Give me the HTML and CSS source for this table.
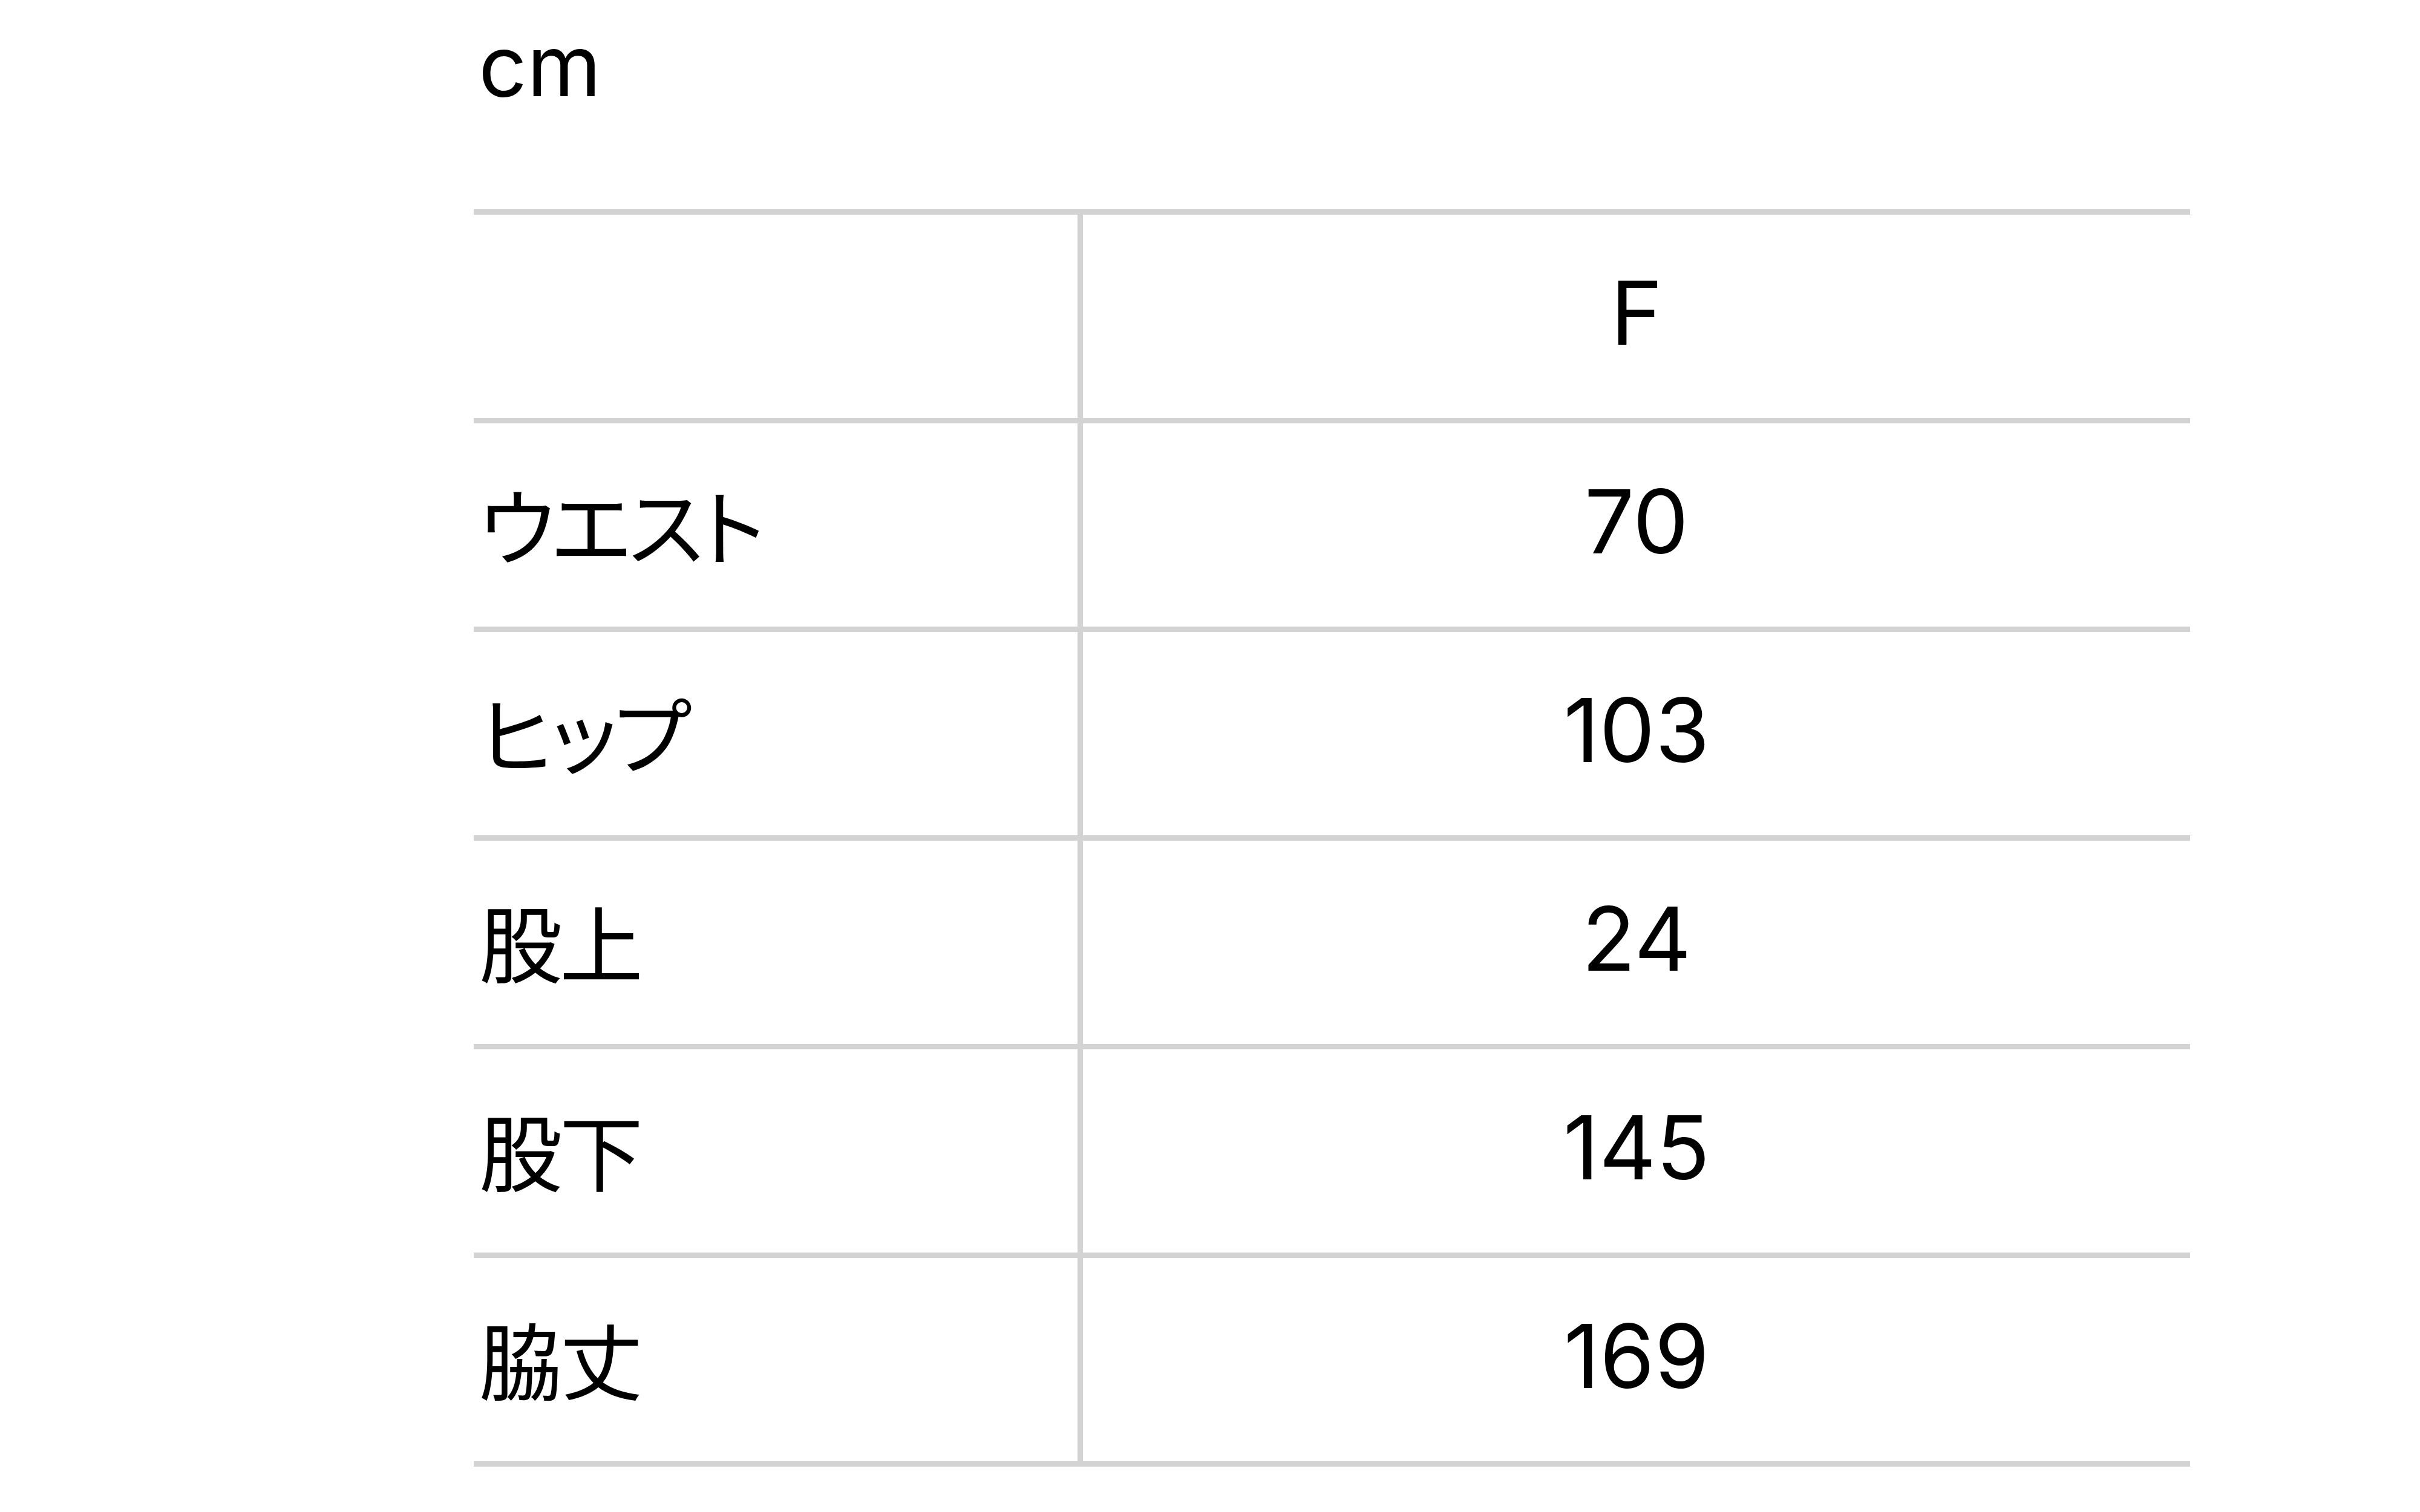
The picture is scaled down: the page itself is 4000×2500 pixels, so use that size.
FILE: index.html
```html
<!DOCTYPE html>
<html lang="ja">
<head>
<meta charset="utf-8">
<link rel="stylesheet" href="styles.css">
</head>
<body>
<div class="page">
  <div class="unit">cm</div>
  <table class="size-table">
    <tr><th class="label"></th><th class="value">F</th></tr>
    <tr><td class="label">ウエスト</td><td class="value">70</td></tr>
    <tr><td class="label">ヒップ</td><td class="value">103</td></tr>
    <tr><td class="label">股上</td><td class="value">24</td></tr>
    <tr><td class="label">股下</td><td class="value">145</td></tr>
    <tr><td class="label">脇丈</td><td class="value">169</td></tr>
  </table>
</div>
</body>
</html>
```
FILE: styles.css
```css
html, body {
  margin: 0;
  padding: 0;
  background: #ffffff;
}
body {
  font-family: "Inter", "Noto Sans CJK JP", "Noto Sans", sans-serif;
  color: #000000;
  font-feature-settings: "palt";
}
.page {
  padding-left: 783px;
  width: 2837px;
}
.unit {
  font-size: 140px;
  line-height: 166px;
  padding-top: 25px;
  margin-bottom: 155px;
  padding-left: 8px;
}
.size-table {
  border-collapse: collapse;
  width: 2837px;
  table-layout: fixed;
}
.size-table th,
.size-table td {
  font-weight: 400;
  line-height: 1;
  padding: 0;
  border-top: 9px solid #d3d3d3;
  border-bottom: 9px solid #d3d3d3;
  vertical-align: middle;
}
.size-table .label {
  width: 989px;
  height: 328px;
  font-family: "Noto Sans CJK JP", sans-serif;
  font-size: 138px;
  letter-spacing: -5px;
  text-align: left;
  border-right: 9px solid #d3d3d3;
  padding-left: 9px;
  padding-bottom: 8px;
}
.size-table .value {
  height: 324px;
  font-size: 146px;
  text-align: center;
  padding-bottom: 12px;
}
```
